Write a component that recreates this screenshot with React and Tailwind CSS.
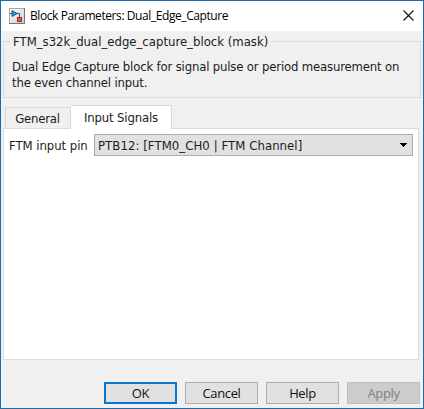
const body = "font-['DejaVu_Sans_Condensed','DejaVu_Sans',sans-serif] [font-stretch:condensed] text-[13px] whitespace-nowrap text-[#1c1c1c]";
const ui = "font-['Open_Sans',sans-serif] whitespace-nowrap";

function ModelIcon() {
  return (
    <svg width="16" height="16" viewBox="0 0 16 16" className="-mt-px ml-px shrink-0">
      <defs>
        <linearGradient id="face" x1="0" y1="0" x2="1" y2="1">
          <stop offset="0" stopColor="#ffffff" />
          <stop offset="1" stopColor="#c3ccd6" />
        </linearGradient>
      </defs>
      <rect x="0.5" y="0.5" width="15" height="15" fill="url(#face)" stroke="#a9a9a9" />
      <path d="M15.5 0V15.5H0" fill="none" stroke="#77736f" />
      <path d="M1 5.5H3M8 5.5H10.5V10" fill="none" stroke="#28506e" />
      <path d="M3 2.5V8.5L8.3 5.5Z" fill="#3d91c9" stroke="#1d5f91" />
      <rect x="8.5" y="9.5" width="4" height="4" fill="#d8603c" stroke="#a52f1c" />
    </svg>
  );
}

function DialogButton({ label, className = "border border-[#adadad] bg-[#e1e1e1] text-[#111]" }) {
  return (
    <button className={`${ui} flex h-[22px] w-[73px] items-center justify-center pt-px text-[13px] tracking-[-0.35px] ${className}`}>
      {label}
    </button>
  );
}

export default function App() {
  return (
    <div className="flex h-[409px] w-[424px] flex-col border border-[#1f6aa8] bg-[#f0f0f0]">
      <header className="flex h-[30px] shrink-0 items-center bg-white pl-[7px] pr-[9px]">
        <ModelIcon />
        <h1 className={`${ui} ml-[5px] grow text-[12px] tracking-[-0.42px] text-black`}>Block Parameters: Dual_Edge_Capture</h1>
        <svg width="11" height="11" viewBox="0 0 11 11" className="-mt-px">
          <path d="M0.5 0.5L10.5 10.5M10.5 0.5L0.5 10.5" stroke="#111" strokeWidth="1.1" />
        </svg>
      </header>

      <fieldset className="ml-[2px] mr-[2px] mt-[2px] h-[65px] shrink-0 border border-[#dcdcdc] pl-2">
        <legend className={`${body} -ml-[2px] h-4 px-[3px] leading-[17px]`}>FTM_s32k_dual_edge_capture_block (mask)</legend>
        <p className={`${body} mt-[10px] leading-4 tracking-[-0.17px]`}>
          Dual Edge Capture block for signal pulse or period measurement on
          <br />
          the even channel input.
        </p>
      </fieldset>

      <div className="ml-1 mt-[6px] flex h-[24px] shrink-0 items-end">
        <div className={`${body} flex h-[21px] w-[66px] items-center justify-center border border-b-0 border-[#d9d9d9] pr-px pt-px tracking-[-0.2px]`}>General</div>
        <div className={`${body} relative z-10 -mb-px flex h-[24px] w-[101px] items-center justify-center border border-b-0 border-l-0 border-[#d9d9d9] bg-white tracking-[-0.15px]`}>Input Signals</div>
      </div>
      <main className="ml-[2px] h-[232px] w-[416px] shrink-0 border border-[#dcdcdc] bg-white pl-[5px] pt-[5px]">
        <div className="flex items-center">
          <span className={`${body} w-[85px] pt-[2px] tracking-[-0.05px]`}>FTM input pin</span>
          <div className="flex h-[22px] w-[319px] items-center justify-between border border-[#adadad] bg-[#e1e1e1] pl-[3px] pr-[5px]">
            <span className={`${body} pt-[2px] tracking-[0.07px]`}>PTB12: [FTM0_CH0 | FTM Channel]</span>
            <svg width="7" height="4" viewBox="0 0 7 4">
              <path d="M0 0H7V1H6V2H5V3H4V4H3V3H2V2H1V1H0Z" fill="#000" />
            </svg>
          </div>
        </div>
      </main>

      <footer className="mt-[22px] flex gap-2 pl-[103px]">
        <DialogButton label="OK" className="border-2 border-[#0878cf] bg-[#e1e1e1] text-[#111]" />
        <DialogButton label="Cancel" />
        <DialogButton label="Help" />
        <DialogButton label="Apply" className="border border-[#bfbfbf] bg-[#cccccc] text-[#838383]" />
      </footer>
    </div>
  );
}
